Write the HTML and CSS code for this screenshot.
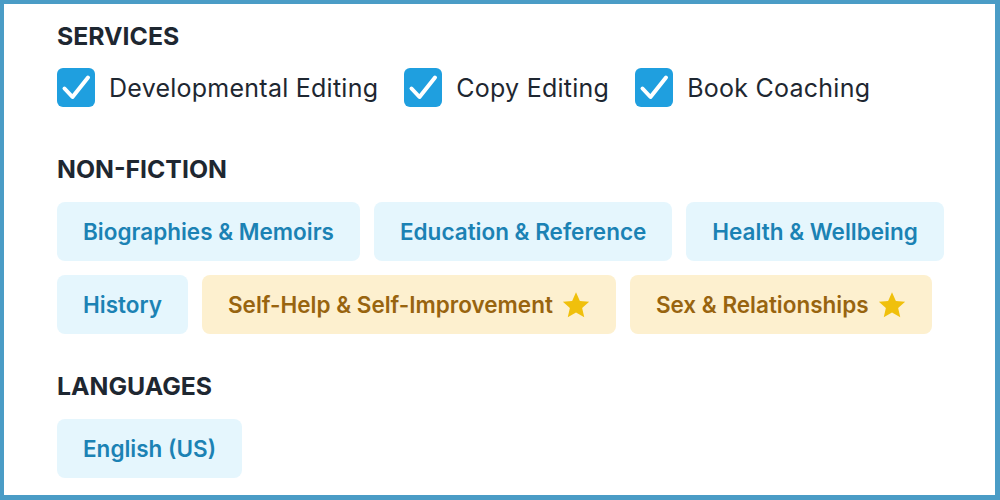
FILE: index.html
```html
<!DOCTYPE html>
<html lang="en">
<head>
<meta charset="utf-8">
<title>Profile</title>
<link rel="stylesheet" href="styles.css">
</head>
<body>
<div class="panel">
  <h2 class="heading">SERVICES</h2>
  <div class="services">
    <label class="check"><span class="box"><svg viewBox="0 0 38 39" width="38" height="39"><path d="M7.5 20.5l8 8.5L31 9.5" fill="none" stroke="#fff" stroke-width="4" stroke-linecap="round" stroke-linejoin="round"/></svg></span><span class="check-label">Developmental Editing</span></label>
    <label class="check"><span class="box"><svg viewBox="0 0 38 39" width="38" height="39"><path d="M7.5 20.5l8 8.5L31 9.5" fill="none" stroke="#fff" stroke-width="4" stroke-linecap="round" stroke-linejoin="round"/></svg></span><span class="check-label">Copy Editing</span></label>
    <label class="check"><span class="box"><svg viewBox="0 0 38 39" width="38" height="39"><path d="M7.5 20.5l8 8.5L31 9.5" fill="none" stroke="#fff" stroke-width="4" stroke-linecap="round" stroke-linejoin="round"/></svg></span><span class="check-label">Book Coaching</span></label>
  </div>

  <h2 class="heading heading-gap">NON-FICTION</h2>
  <div class="chips">
    <span class="chip">Biographies &amp; Memoirs</span>
    <span class="chip">Education &amp; Reference</span>
    <span class="chip">Health &amp; Wellbeing</span>
    <span class="chip">History</span>
    <span class="chip chip-gold"><span>Self-Help &amp; Self-Improvement</span><svg class="star" viewBox="0 0 24 24" width="30" height="30"><path d="M12 1.8l3.1 6.9 7.4.7-5.6 5 1.7 7.4L12 17.9l-6.6 3.9 1.7-7.4-5.6-5 7.4-.7z" fill="#f0c00c"/></svg></span>
    <span class="chip chip-gold"><span>Sex &amp; Relationships</span><svg class="star" viewBox="0 0 24 24" width="30" height="30"><path d="M12 1.8l3.1 6.9 7.4.7-5.6 5 1.7 7.4L12 17.9l-6.6 3.9 1.7-7.4-5.6-5 7.4-.7z" fill="#f0c00c"/></svg></span>
  </div>

  <h2 class="heading heading-gap2">LANGUAGES</h2>
  <div class="chips">
    <span class="chip">English (US)</span>
  </div>
</div>
</body>
</html>
```

FILE: styles.css
```css
html, body {
  margin: 0;
  padding: 0;
  background: #ffffff;
}

.panel {
  box-sizing: border-box;
  width: 1000px;
  height: 500px;
  border-style: solid;
  border-color: #4a9cc6;
  border-width: 4px 5px 5px 4px;
  padding: 18px 40px 0 53px;
  font-family: "Inter", "Noto Sans", sans-serif;
  color: #1e2731;
}

.heading {
  margin: 0;
  font-size: 24.8px;
  line-height: 28px;
  font-weight: 700;
  color: #1e2731;
}

.heading-gap { margin-top: 48px; }
.heading-gap2 { margin-top: 38px; }

.services {
  display: flex;
  gap: 26px;
  margin-top: 18px;
  height: 39px;
  align-items: center;
}

.check {
  display: flex;
  align-items: center;
  gap: 14px;
}

.box {
  width: 38px;
  height: 39px;
  border-radius: 6px;
  background: #1f9fdf;
  display: flex;
  align-items: center;
  justify-content: center;
}

.check-label {
  font-size: 25px;
  font-weight: 400;
  letter-spacing: 0.25px;
  color: #1e2731;
}

.chips {
  display: flex;
  flex-wrap: wrap;
  gap: 14px 14px;
  margin-top: 19px;
}

.chip {
  display: inline-flex;
  align-items: center;
  gap: 8px;
  height: 59px;
  padding: 0 26px;
  box-sizing: border-box;
  border-radius: 8px;
  background: #e5f6fd;
  color: #1b82b4;
  font-size: 22.5px;
  font-weight: 600;
}

.chip-gold {
  background: #fdf0cf;
  color: #98640f;
  padding-right: 25px;
}

.star {
  flex: none;
}
```
